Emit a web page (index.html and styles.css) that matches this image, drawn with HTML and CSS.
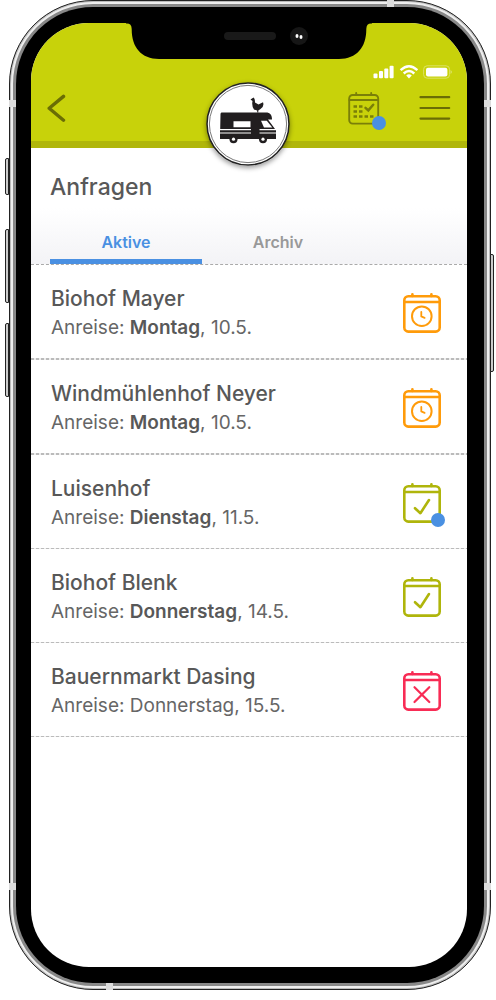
FILE: index.html
```html
<!DOCTYPE html>
<html lang="de">
<head>
<meta charset="utf-8">
<meta name="viewport" content="width=device-width, initial-scale=1">
<title>Anfragen</title>
<link rel="stylesheet" href="styles.css">
</head>
<body>
<svg class="defs" aria-hidden="true">
  <symbol id="calendar" viewBox="0 0 38 40">
    <rect x="1.3" y="3.2" width="35.4" height="35.4" rx="4"/>
    <path d="M1.5 9H36.5M9.4 1.3V3M28.4 1.3V3"/>
  </symbol>
  <symbol id="clock" viewBox="0 0 38 40">
    <use href="#calendar"/>
    <circle cx="18.8" cy="23.2" r="9.8" stroke-width="2"/>
    <path d="M18.3 19v4.4l3.3 1.4" stroke-width="1.8"/>
  </symbol>
  <symbol id="check" viewBox="0 0 38 40">
    <use href="#calendar"/>
    <path d="M12 25.2L17.4 30.2L26 17"/>
  </symbol>
  <symbol id="cross" viewBox="0 0 38 40">
    <use href="#calendar"/>
    <path d="M11.5 16.2L26.3 31M26.3 16.2L11.5 31" stroke-width="2.2"/>
  </symbol>
</svg>

<div class="phone">
  <span class="key key-mute"></span>
  <span class="key key-up"></span>
  <span class="key key-down"></span>
  <span class="key key-power"></span>
  <span class="antenna side left high"></span>
  <span class="antenna side right high"></span>
  <span class="antenna side left low"></span>
  <span class="antenna side right low"></span>
  <span class="antenna edge top"></span>
  <span class="antenna edge bottom"></span>

  <div class="bezel">
    <div class="screen">
      <header class="header">
        <svg class="notch" viewBox="0 0 236 37" aria-hidden="true">
          <path d="M-5 0H241V.6H240Q235.500 .6 235.300 6C235.500 24 226 36 208 36H28C10 36 .5 24 .7 6Q.5 .6 -4 .6H-5Z"/>
          <rect x="93" y="9" width="52" height="8" rx="4" fill="#191919"/>
          <circle cx="168" cy="13" r="9" fill="#161616"/>
          <ellipse cx="166" cy="13" rx="1.500" ry="2" fill="#fff"/>
          <ellipse cx="170" cy="14" rx="1.500" ry="2" fill="#fff"/>
        </svg>
        <div class="status">
          <svg width="80" height="16" viewBox="0 0 80 16" fill="#fff" aria-hidden="true">
            <rect x="0.5" y="9.5" width="4" height="4.8" rx="1"/>
            <rect x="6" y="7" width="4" height="7.3" rx="1"/>
            <rect x="11.3" y="4.5" width="4" height="9.8" rx="1"/>
            <rect x="16.6" y="1.8" width="4" height="12.5" rx="1"/>
            <g fill="none" stroke="#fff" stroke-width="2.4">
              <path d="M27.6 6.2Q36 -1.6 44.4 6.2"/>
              <path d="M30.7 9.5Q36 4.7 41.3 9.5"/>
            </g>
            <path d="M33.2 11.4Q36 9 38.8 11.4L36 14.4Z"/>
            <rect x="50.6" y="1.8" width="26" height="12.4" rx="3.6" fill="none" stroke="#e1e679" stroke-width="0.8"/>
            <rect x="53" y="3.8" width="21.4" height="8.6" rx="2"/>
            <path d="M77.6 6Q80 8 77.6 10Z" fill="#e1e679"/>
          </svg>
        </div>
        <nav class="nav" aria-label="Navigation">
          <button class="icon-button" aria-label="Zurück">
            <svg width="20" height="30" viewBox="0 0 20 30" fill="none" stroke="#6a6d05" stroke-width="3.4" stroke-linecap="round" stroke-linejoin="round"><path d="M16.5 3.4L2.2 15.3L16.5 27.2"/></svg>
          </button>
          <div class="actions">
            <button class="icon-button" aria-label="Kalender">
              <svg width="32" height="33" viewBox="0 0 32 33" fill="none" stroke="#7a7f08" stroke-width="1.9" stroke-linecap="round">
                <rect x="1.2" y="3" width="29" height="28.6" rx="3.5"/>
                <path d="M1.4 8H30M8.2 1V3M23.2 1V3"/>
                <path d="M5.5 14.5H9M11 14.5H14.5M5.5 19.5H9M11 19.5H14.5M5.5 24.5H9M11 24.5H14.5M16.5 24.5H20M22 24.5H25.5" stroke-width="2.4" stroke-linecap="butt"/>
                <path d="M17.5 15.8L20.3 18.4L25.2 12.8" stroke-width="2.5"/>
              </svg>
              <span class="dot"></span>
            </button>
            <button class="icon-button" aria-label="Menü">
              <svg width="32" height="26" viewBox="0 0 32 26" fill="none" stroke="#6a6d05" stroke-width="2.2" stroke-linecap="round"><path d="M1.5 2.2H30.2M1.5 13H30.2M1.5 23.6H30.2"/></svg>
            </button>
          </div>
        </nav>
        <a class="logo" href="#" aria-label="Startseite">
          <svg viewBox="0 0 84 84">
            <circle cx="42" cy="42" r="41" fill="#fff" stroke="#222" stroke-width="1.6"/>
            <circle cx="42" cy="42" r="38.6" fill="none" stroke="#555" stroke-width="0.8"/>
            <g fill="#211e1f">
              <path d="M15.5 30.500H60C64 30.500 66 33 66 37.500H62L69 47H14.200L14.500 32Q14.600 30.500 15.500 30.500Z"/>
              <path d="M14 48.3H70V50.600H14ZM14 51.600H70V57H14Z"/>
              <circle cx="27.5" cy="57.2" r="4"/><circle cx="57" cy="57.200" r="4"/>
              <path d="M44.500 17.500L47.500 15.500Q49 16.500 49 20.500L52.500 22.600L57 20.300Q58.500 24.500 54.500 27L52.300 28.500V30.500H51.200V28.500L48 27.500Q45.500 24 46.500 19Z"/>
            </g>
            <g fill="#fff">
              <path d="M27.5 39.2H44.5V45.3H27.5Z"/>
              <path d="M55 38.8H60.8L66.3 45.4H58Z"/>
              <circle cx="27.5" cy="57.2" r="1.6"/><circle cx="57" cy="57.2" r="1.6"/>
            </g>
            <rect x="45" y="45" width="8.5" height="10" fill="#211e1f"/>
          </svg>
        </a>
      </header>

      <main>
        <h1 class="title">Anfragen</h1>
        <div class="tabs" role="tablist">
          <button class="tab active" role="tab" aria-selected="true">Aktive</button>
          <button class="tab" role="tab" aria-selected="false">Archiv</button>
        </div>
        <ul class="requests">
          <li><a class="request pending" href="#">
            <span class="text"><span class="name">Biohof Mayer</span><span class="date">Anreise: <b>Montag</b>, 10.5.</span></span>
            <span class="state"><svg><use href="#clock"/></svg></span>
          </a></li>
          <li><a class="request pending" href="#">
            <span class="text"><span class="name">Windmühlenhof Neyer</span><span class="date">Anreise: <b>Montag</b>, 10.5.</span></span>
            <span class="state"><svg><use href="#clock"/></svg></span>
          </a></li>
          <li><a class="request accepted" href="#">
            <span class="text"><span class="name">Luisenhof</span><span class="date">Anreise: <b>Dienstag</b>, 11.5.</span></span>
            <span class="state"><svg><use href="#check"/></svg><span class="dot"></span></span>
          </a></li>
          <li><a class="request accepted" href="#">
            <span class="text"><span class="name">Biohof Blenk</span><span class="date">Anreise: <b>Donnerstag</b>, 14.5.</span></span>
            <span class="state"><svg><use href="#check"/></svg></span>
          </a></li>
          <li><a class="request declined" href="#">
            <span class="text"><span class="name">Bauernmarkt Dasing</span><span class="date">Anreise: Donnerstag, 15.5.</span></span>
            <span class="state"><svg><use href="#cross"/></svg></span>
          </a></li>
        </ul>
      </main>
    </div>
  </div>
</div>
</body>
</html>
```

FILE: styles.css
```css
* {
  box-sizing: border-box;
}

body {
  margin: 0;
  background: #fff;
  color: #585858;
  font-family: Inter, "Liberation Sans", sans-serif;
}

button {
  margin: 0;
  padding: 0;
  border: 0;
  background: none;
  font: inherit;
  color: inherit;
  cursor: pointer;
}

a {
  color: inherit;
  text-decoration: none;
}

svg {
  display: block;
}

.defs {
  position: absolute;
  width: 0;
  height: 0;
}

/* Device frame */
.phone {
  position: relative;
  display: flex;
  min-height: calc(100vh - 10px);
  margin: 0 5px 10px 9px;
  padding: 6px;
  border: 1px solid #222;
  border-radius: 84px;
  background: #888;
  box-shadow: inset 0 0 0 1px #bbb, inset 0 0 0 3px #eee;
}

.bezel {
  flex: 1;
  display: flex;
  min-width: 0;
  padding: 16px 17px 16px 15px;
  border-radius: 77px;
  background: #000;
}

.screen {
  flex: 1;
  min-width: 0;
  overflow: hidden;
  border-radius: 58px;
  background: #fff;
}

.key {
  position: absolute;
  left: -5px;
  width: 4px;
  border: 1px solid #222;
  border-radius: 2px 0 0 2px;
  background: #ccc;
}

.key-mute {
  top: 157px;
  height: 37px;
}

.key-up {
  top: 228px;
  height: 74px;
}

.key-down {
  top: 322px;
  height: 74px;
}

.key-power {
  top: 253px;
  left: auto;
  right: -4px;
  height: 118px;
  border-radius: 0 2px 2px 0;
}

.antenna {
  position: absolute;
  width: 7px;
  height: 7px;
  background: #ddd;
}

.left {
  left: -1px;
}

.right {
  right: -1px;
}

.high {
  top: 99px;
}

.low {
  bottom: 99px;
}

.top {
  top: -1px;
  right: 96px;
}

.bottom {
  bottom: -1px;
  left: 96px;
}

/* Header */
.header {
  position: relative;
  border-bottom: 7px solid #b0b60b;
  background: #c8d20a;
}

.notch {
  position: absolute;
  top: 0;
  left: 50%;
  width: 236px;
  height: 37px;
  margin-left: -118px;
  overflow: visible;
}

.status {
  display: flex;
  justify-content: flex-end;
  padding: 41px 14px 0 0;
}

.nav {
  display: flex;
  align-items: center;
  justify-content: space-between;
  height: 61px;
  padding: 0 16px 5px;
}

.actions {
  display: flex;
  align-items: center;
  gap: 39px;
}

.icon-button {
  position: relative;
}

.dot {
  position: absolute;
  right: -6px;
  bottom: -5px;
  width: 14px;
  height: 14px;
  border-radius: 50%;
  background: #4a90e2;
}

.logo {
  position: absolute;
  bottom: -25px;
  left: 50%;
  width: 84px;
  height: 84px;
  margin-left: -43px;
  border-radius: 50%;
  box-shadow: 0 2px 5px rgba(0, 0, 0, 0.4);
}

/* Content */
.title {
  margin: 0;
  padding: 25px 19px 7px;
  font-size: 23px;
  line-height: 28px;
  font-weight: 500;
}

.tabs {
  display: flex;
  padding: 0 19px;
  border-bottom: 1px dashed #aaa;
  background: linear-gradient(#fff, #f3f3f6);
}

.tab {
  flex: 0 1 152px;
  padding: 24px 0 7px;
  border-bottom: 5px solid transparent;
  color: #999;
  font-size: 16px;
  line-height: 20px;
  font-weight: 600;
}

.tab.active {
  border-color: #4a90e2;
  color: #4a90e2;
}

.requests {
  margin: 0;
  padding: 0;
  list-style: none;
}

.request {
  display: flex;
  align-items: center;
  justify-content: space-between;
  padding: 20px 26px 16px 20px;
  background: repeating-linear-gradient(90deg, #bbb 0 3px, #eee 3px 5px) bottom / 100% 1px no-repeat;
}

.pending {
  padding-bottom: 17px;
  background-size: 100% 2px;
}

.text {
  display: flex;
  flex-direction: column;
}

.name {
  font-size: 21px;
  line-height: 28px;
  font-weight: 500;
}

.date {
  font-size: 19px;
  line-height: 30px;
  color: #666;
}

.date b {
  color: #585858;
  font-weight: 600;
}

.state {
  position: relative;
  margin-bottom: 2px;
}

.state svg {
  width: 38px;
  height: 40px;
  fill: none;
  stroke: currentColor;
  stroke-width: 2.6;
  stroke-linecap: round;
  stroke-linejoin: round;
}

.state .dot {
  right: -4px;
  bottom: -4px;
}

.pending .state {
  color: #ff9b0a;
}

.accepted .state {
  color: #afb50b;
}

.declined .state {
  color: #f82c55;
}
```
